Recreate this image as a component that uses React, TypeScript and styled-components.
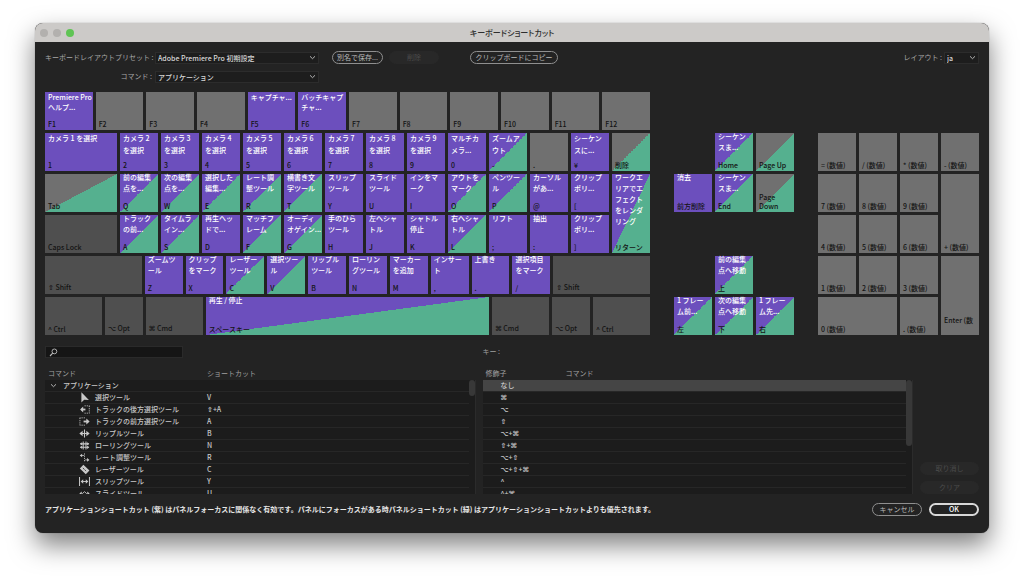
import React from "react";
import styled, { createGlobalStyle, css } from "styled-components";

const GlobalStyle = createGlobalStyle`
  * { box-sizing: border-box; }
  body {
    margin: 0;
    background: #fff;
    font-family: "Noto Sans CJK JP", "DejaVu Sans", sans-serif;
  }
  button, input, select {
    font: inherit;
    color: inherit;
    margin: 0;
    padding: 0;
    border: 0;
    background: none;
  }
`;

const Desktop = styled.div`
  padding: 23px 35px 47px;
`;

const Dialog = styled.main`
  background: #232323;
  border-radius: 8px;
  color: #c4c4c4;
  font-size: 7px;
  line-height: 11px;
  box-shadow: 0 12px 26px rgba(0, 0, 0, 0.5), 0 0 1px rgba(0, 0, 0, 0.5);
`;

const TitleBar = styled.header`
  display: grid;
  grid-template-columns: 1fr auto 1fr;
  align-items: center;
  height: 19px;
  padding: 0 5px;
  border-radius: 8px 8px 0 0;
  background: #cccac8;
`;

const Lights = styled.div`
  display: flex;
  gap: 5px;
`;

const Light = styled.button<{ $on?: boolean }>`
  width: 8px;
  height: 8px;
  border-radius: 50%;
  background: ${(p) => (p.$on ? "#5fc454" : "#b2b0ae")};
`;

const Title = styled.h1`
  margin: 0;
  font-size: 8px;
  font-weight: 500;
  font-feature-settings: "palt";
  color: #2e2e2e;
`;

const Body = styled.div`
  padding: 9px 10px 17px;
`;

const Toolbar = styled.div`
  display: grid;
  grid-template-columns: 107px 164px auto 1fr auto;
  grid-auto-rows: 13px;
  align-items: center;
  gap: 6px 3px;
`;

const FieldLabel = styled.label`
  text-align: right;
  white-space: nowrap;
  color: #a8a8a8;
`;

const SelectBox = styled.div<{ $width?: number }>`
  display: grid;
  grid-template-columns: 1fr 12px;
  align-items: center;
  height: 12px;
  width: ${(p) => (p.$width ? `${p.$width}px` : "auto")};
  border: 1px solid #2c2c2c;
  background: #1d1d1d;
  select {
    grid-area: 1 / 1 / 2 / 3;
    appearance: none;
    height: 10px;
    padding-left: 2px;
    line-height: 10px;
    font-weight: 500;
    color: #d6d6d6;
  }
  svg {
    grid-area: 1 / 2;
    justify-self: center;
    pointer-events: none;
  }
`;

const ButtonGroup = styled.div`
  display: flex;
  gap: 6px;
  margin-left: 10px;
`;

const Pill = styled.button<{ $width: number; $kind?: "primary" | "muted" }>`
  width: ${(p) => p.$width}px;
  height: 13px;
  border-radius: 7px;
  border: 1px solid #8f8f8f;
  line-height: 11px;
  white-space: nowrap;
  color: #b8b8b8;
  ${(p) =>
    p.$kind === "muted" &&
    css`
      border-color: #282828;
      background: #282828;
      color: #4c4c4c;
    `}
  ${(p) =>
    p.$kind === "primary" &&
    css`
      border: 2px solid #d8d8d8;
      line-height: 9px;
      font-weight: 500;
      color: #fff;
    `}
`;

const CopySlot = styled.div`
  margin-left: 28px;
`;

const LayoutField = styled.div`
  display: flex;
  align-items: center;
  gap: 2px;
`;

const Keyboard = styled.section`
  display: grid;
  grid-template-columns: 605fr 120fr 161fr;
  column-gap: 24px;
  margin-top: 9px;
`;

const MainBlock = styled.div`
  display: grid;
  gap: 3px;
`;

type Tone = "cmd" | "both" | "panel" | "free" | "mod";

const PURPLE = "#6c4fbd";
const GREEN = "#55b08f";
const GREY = "#707070";

const toneFill: Record<Tone, string> = {
  cmd: PURPLE,
  both: `linear-gradient(to bottom right, ${PURPLE} 50%, ${GREEN} 50%)`,
  panel: `linear-gradient(to bottom right, ${GREY} 50%, ${GREEN} 50%)`,
  free: GREY,
  mod: "#4f4f4f",
};

const KeyCap = styled.button<{ $tone: Tone; $area?: string }>`
  display: flex;
  flex-direction: column;
  justify-content: space-between;
  min-width: 0;
  padding: 0 0 1px 3px;
  grid-area: ${(p) => p.$area ?? "auto"};
  background: ${(p) => toneFill[p.$tone]};
  text-align: left;
  white-space: pre;
`;

const KeyCommand = styled.span`
  margin-top: -2px;
  line-height: 11px;
  font-weight: 500;
  color: #fff;
`;

const KeyName = styled.span<{ $raised?: boolean }>`
  margin-top: auto;
  padding-bottom: ${(p) => (p.$raised ? 9 : 0)}px;
  line-height: 9px;
  font-weight: 500;
  color: #141414;
`;

const KeyGrid = styled.div<{ $columns: string }>`
  display: grid;
  grid-template-columns: ${(p) => p.$columns};
  grid-auto-rows: 38px;
  gap: 3px;
`;

const FunctionGrid = styled(KeyGrid)`
  ${KeyCommand} {
    margin-top: 0;
    line-height: 10px;
  }
`;

const DigitGrid = styled(KeyGrid)`
  ${KeyCommand} {
    margin-top: -1px;
    line-height: 12px;
  }
`;

const SideGrid = styled(KeyGrid)`
  padding-top: 41px;
`;

const Symbol = styled.span`
  font-family: "DejaVu Sans", sans-serif;
  font-weight: 700;
`;

const SearchRow = styled.div`
  display: grid;
  grid-template-columns: 1fr 1fr 59px;
  gap: 7px;
  margin-top: 11px;
`;

const SearchBox = styled.div`
  display: flex;
  align-items: center;
  width: 138px;
  height: 12px;
  padding-left: 3px;
  border: 1px solid #2a2a2a;
  background: #151515;
  input {
    flex: 1;
    min-width: 0;
    height: 10px;
    padding-left: 3px;
    outline: none;
  }
`;

const KeyLabel = styled.span`
  color: #a0a0a0;
`;

const Lists = styled.div`
  display: grid;
  grid-template-columns: 1fr 1fr 59px;
  gap: 7px;
  margin-top: 8px;
`;

const ListFrame = styled.div`
  display: grid;
  grid-template-columns: 1fr 7px;
  height: 128px;
  overflow: hidden;
`;

const Gutter = styled.div`
  margin-top: 14px;
  background: #1c1c1c;
  border: solid #2b2b2b;
  border-width: 0 1px 1px 0;
`;

const Thumb = styled.div<{ $height: number }>`
  height: ${(p) => p.$height}px;
  border-radius: 3px;
  background: #383838;
`;

const Table = styled.table`
  width: 100%;
  height: 0;
  border-collapse: collapse;
  table-layout: fixed;
  th,
  td {
    height: 12px;
    padding: 0;
    line-height: 11px;
    text-align: left;
    vertical-align: top;
    white-space: nowrap;
  }
`;

const HeadCell = styled.th<{ $width?: number }>`
  width: ${(p) => (p.$width ? `${p.$width}px` : "auto")};
  font-weight: 400;
  color: #a0a0a0;
  && {
    height: 14px;
    padding-left: 3px;
    vertical-align: middle;
  }
`;

const Row = styled.tr<{ $selected?: boolean }>`
  background: ${(p) => (p.$selected ? "#454545" : "#1c1c1c")};
  color: #c8c8c8;
  font-weight: 500;
  box-shadow: inset 0 -1px 0 #272727;
`;

const GroupName = styled.div`
  display: flex;
  align-items: center;
  gap: 6px;
  padding-left: 5px;
`;

const ToolName = styled.div`
  display: flex;
  align-items: center;
  gap: 4px;
  padding-left: 33px;
`;

const ShortcutText = styled.div`
  padding-left: 3px;
`;

const ModifierText = styled.div`
  padding-left: 18px;
`;

const SideButtons = styled.div`
  display: flex;
  flex-direction: column;
  justify-content: flex-end;
  gap: 6px;
`;

const Footer = styled.footer`
  display: flex;
  align-items: center;
  gap: 7px;
  margin-top: 9px;
`;

const Note = styled.p`
  flex: 1;
  margin: 0;
  font-weight: 700;
  color: #e6e6e6;
`;

const Chevron = () => (
  <svg width="7" height="7" viewBox="0 0 7 7" fill="none" stroke="#b4b4b4" strokeWidth="1">
    <path d="M1 2.3 3.5 4.7 6 2.3" />
  </svg>
);

const SearchIcon = () => (
  <svg width="9" height="9" viewBox="0 0 9 9" fill="none" stroke="#bdbdbd">
    <circle cx="5.4" cy="3.4" r="2.4" strokeWidth="0.9" />
    <path d="M3.7 5.2 1 8" strokeWidth="1.1" />
  </svg>
);

type ToolKind =
  | "select"
  | "backward"
  | "forward"
  | "ripple"
  | "rolling"
  | "rate"
  | "razor"
  | "slip"
  | "slide";

const toolShapes: Record<ToolKind, React.ReactNode> = {
  select: <path d="M2.6 0.4V11.4l3.1-3 5.1 .2Z" fill="#c8c8c8" stroke="none" />,
  backward: (
    <>
      <path d="M2.5 6h4.5" strokeWidth="2" />
      <path d="M4.6 2.8 1.2 6l3.4 3.2Z" fill="#c8c8c8" stroke="none" />
      <path d="M6 2h5.5M6 10h5.5M11.2 2v8" strokeDasharray="1.4 1" strokeWidth="0.9" />
    </>
  ),
  forward: (
    <>
      <path d="M5 6h4.5" strokeWidth="2" />
      <path d="M8 2.8 11.6 6 8 9.2Z" fill="#c8c8c8" stroke="none" />
      <path d="M6.5 2H.8M6.5 10H.8M1 2v8" strokeDasharray="1.4 1" strokeWidth="0.9" />
    </>
  ),
  ripple: (
    <>
      <path d="M6 1.6v8.8" strokeWidth="1.2" />
      <path d="M2 6h8" strokeWidth="1.1" />
      <path d="M4 3 .4 6 4 9ZM8 3 11.6 6 8 9Z" fill="#c8c8c8" stroke="none" />
    </>
  ),
  rolling: (
    <>
      <path d="M4.6 1.6v8.8M7.6 1.6v8.8" strokeWidth="1.1" />
      <path d="M1.5 4.2h9.2M1.5 7.9h9.2" strokeWidth="1.2" />
      <path d="M3.4 2.4 1 4.2 3.4 6ZM8.8 2.4l2.4 1.8L8.8 6ZM3.4 6.2 1 7.9l2.4 1.8ZM8.8 6.2l2.4 1.7-2.4 1.8Z" fill="#c8c8c8" stroke="none" />
    </>
  ),
  rate: (
    <>
      <path d="M6 1.5v9" strokeDasharray="1.4 1" strokeWidth="0.9" />
      <path d="M2 3.8h3.4M6.8 8.6h3" strokeWidth="0.9" />
      <path d="M3.4 1.8.8 3.8l2.6 2ZM8.8 6.6l2.6 2-2.6 2Z" fill="#c8c8c8" stroke="none" />
    </>
  ),
  razor: (
    <>
      <path d="M4.8 0.9 11.4 7.2 7.4 11.2 0.9 4.9Z" fill="#c8c8c8" stroke="none" />
      <path d="M4.2 4.3 8 8" stroke="#1c1c1c" strokeWidth="0.9" strokeDasharray="2 .6" />
    </>
  ),
  slip: (
    <>
      <path d="M.6 1.2v9.6M11.4 1.2v9.6" strokeWidth="1.1" />
      <path d="M3 6h6" strokeWidth="1" />
      <path d="M4.6 3.5 1.8 6l2.8 2.5ZM7.4 3.5 10.2 6 7.4 8.5Z" fill="#c8c8c8" stroke="none" />
    </>
  ),
  slide: (
    <>
      <path d="M3.8 8.8V6L6 4l2.2 2v2.8" fill="none" strokeWidth="1" />
      <path d="M3 3.8.4 6 3 8.2ZM9 3.8 11.6 6 9 8.2Z" fill="#c8c8c8" stroke="none" />
    </>
  ),
};

const ToolIcon = ({ kind }: { kind: ToolKind }) => (
  <svg width="13" height="11" viewBox="0 0 12 12" fill="none" stroke="#c8c8c8">
    {toolShapes[kind]}
  </svg>
);

interface KeyData {
  name: string;
  tone: Tone;
  command?: string;
  area?: string;
  raised?: boolean;
}

const k = (name: string, tone: Tone = "free", command?: string, area?: string, raised?: boolean): KeyData => ({
  name,
  tone,
  command,
  area,
  raised,
});

const functionRow: KeyData[] = [
  k("F1", "cmd", "Premiere Pro\nヘルプ..."),
  k("F2"),
  k("F3"),
  k("F4"),
  k("F5", "cmd", "キャプチャ..."),
  k("F6", "cmd", "バッチキャプ\nチャ..."),
  k("F7"),
  k("F8"),
  k("F9"),
  k("F10"),
  k("F11"),
  k("F12"),
];

const digitRow: KeyData[] = [
  k("1", "cmd", "カメラ 1 を選択"),
  k("2", "cmd", "カメラ 2\nを選択"),
  k("3", "cmd", "カメラ 3\nを選択"),
  k("4", "cmd", "カメラ 4\nを選択"),
  k("5", "cmd", "カメラ 5\nを選択"),
  k("6", "cmd", "カメラ 6\nを選択"),
  k("7", "cmd", "カメラ 7\nを選択"),
  k("8", "cmd", "カメラ 8\nを選択"),
  k("9", "cmd", "カメラ 9\nを選択"),
  k("0", "cmd", "マルチカ\nメラ..."),
  k("-", "both", "ズームア\nウト"),
  k("."),
  k("¥", "cmd", "シーケン\nスに..."),
  k("削除", "panel"),
];

const letterRows: KeyData[] = [
  k("Tab", "panel"),
  k("Q", "both", "前の編集\n点を..."),
  k("W", "both", "次の編集\n点を..."),
  k("E", "both", "選択した\n編集..."),
  k("R", "both", "レート調\n整ツール"),
  k("T", "both", "横書き文\n字ツール"),
  k("Y", "cmd", "スリップ\nツール"),
  k("U", "cmd", "スライド\nツール"),
  k("I", "cmd", "インをマ\nーク"),
  k("O", "both", "アウトを\nマーク"),
  k("P", "both", "ペンツー\nル"),
  k("@", "cmd", "カーソル\nがあ..."),
  k("[", "cmd", "クリップ\nポリ..."),
  k("リターン", "both", "ワークエ\nリアでエ\nフェクト\nをレンダ\nリング", "1 / 14 / 3 / 15"),

  k("Caps Lock", "mod"),
  k("A", "both", "トラック\nの前..."),
  k("S", "both", "タイムラ\nイン..."),
  k("D", "cmd", "再生ヘッ\nドで..."),
  k("F", "both", "マッチフ\nレーム"),
  k("G", "both", "オーディ\nオゲイン..."),
  k("H", "cmd", "手のひら\nツール"),
  k("J", "cmd", "左へシャ\nトル"),
  k("K", "cmd", "シャトル\n停止"),
  k("L", "both", "右へシャ\nトル"),
  k(";", "cmd", "リフト"),
  k(":", "cmd", "抽出"),
  k("]", "cmd", "クリップ\nポリ..."),
];

const shiftRow: KeyData[] = [
  k("⇧ Shift", "mod"),
  k("Z", "cmd", "ズームツ\nール"),
  k("X", "cmd", "クリップ\nをマーク"),
  k("C", "both", "レーザー\nツール"),
  k("V", "both", "選択ツー\nル"),
  k("B", "cmd", "リップル\nツール"),
  k("N", "cmd", "ローリン\nグツール"),
  k("M", "cmd", "マーカー\nを追加"),
  k(",", "cmd", "インサー\nト"),
  k(".", "cmd", "上書き"),
  k("/", "cmd", "選択項目\nをマーク"),
  k("⇧ Shift", "mod"),
];

const spaceRow: KeyData[] = [
  k("^ Ctrl", "mod"),
  k("⌥ Opt", "mod"),
  k("⌘ Cmd", "mod"),
  k("スペースキー", "both", "再生 / 停止"),
  k("⌘ Cmd", "mod"),
  k("⌥ Opt", "mod"),
  k("^ Ctrl", "mod"),
];

const navKeys: KeyData[] = [
  k("Home", "both", "シーケン\nスま...", "1 / 2"),
  k("Page Up", "panel", undefined, "1 / 3"),
  k("前方削除", "cmd", "消去", "2 / 1"),
  k("End", "both", "シーケン\nスま...", "2 / 2"),
  k("Page\nDown", "panel", undefined, "2 / 3"),
  k("上", "both", "前の編集\n点へ移動", "4 / 2"),
  k("左", "both", "1 フレー\nム前...", "5 / 1"),
  k("下", "both", "次の編集\n点へ移動", "5 / 2"),
  k("右", "both", "1 フレー\nム先...", "5 / 3"),
];

const padKeys: KeyData[] = [
  k("= (数値)"),
  k("/ (数値)"),
  k("* (数値)"),
  k("- (数値)"),
  k("7 (数値)"),
  k("8 (数値)"),
  k("9 (数値)"),
  k("+ (数値)", "free", undefined, "2 / 4 / 4 / 5"),
  k("4 (数値)"),
  k("5 (数値)"),
  k("6 (数値)"),
  k("1 (数値)"),
  k("2 (数値)"),
  k("3 (数値)"),
  k("Enter (数", "free", undefined, "4 / 4 / 6 / 5", true),
  k("0 (数値)", "free", undefined, "5 / 1 / 6 / 3"),
  k(". (数値)"),
];

const tools: { kind: ToolKind; name: string; shortcut: string }[] = [
  { kind: "select", name: "選択ツール", shortcut: "V" },
  { kind: "backward", name: "トラックの後方選択ツール", shortcut: "⇧+A" },
  { kind: "forward", name: "トラックの前方選択ツール", shortcut: "A" },
  { kind: "ripple", name: "リップルツール", shortcut: "B" },
  { kind: "rolling", name: "ローリングツール", shortcut: "N" },
  { kind: "rate", name: "レート調整ツール", shortcut: "R" },
  { kind: "razor", name: "レーザーツール", shortcut: "C" },
  { kind: "slip", name: "スリップツール", shortcut: "Y" },
  { kind: "slide", name: "スライドツール", shortcut: "U" },
];

const modifiers = ["なし", "⌘", "⌥", "⇧", "⌥+⌘", "⇧+⌘", "⌥+⇧", "⌥+⇧+⌘", "^", "^+⌘"];

/* Sets the modifier symbols of a label in the symbol face. */
const Glyphs = ({ text }: { text: string }) => (
  <>
    {text
      .split(/([⌘⌥⇧])/)
      .filter(Boolean)
      .map((part, i) => (/[⌘⌥⇧]/.test(part) ? <Symbol key={i}>{part}</Symbol> : part))}
  </>
);

const Keys = ({ items }: { items: KeyData[] }) => (
  <>
    {items.map((item, i) => (
      <KeyCap key={i} type="button" $tone={item.tone} $area={item.area}>
        {item.command && <KeyCommand>{item.command}</KeyCommand>}
        <KeyName $raised={item.raised}>
          <Glyphs text={item.name} />
        </KeyName>
      </KeyCap>
    ))}
  </>
);

interface DropDownProps {
  id: string;
  value: string;
  width?: number;
}

const DropDown = ({ id, value, width }: DropDownProps) => (
  <SelectBox $width={width}>
    <select id={id} defaultValue={value}>
      <option>{value}</option>
    </select>
    <Chevron />
  </SelectBox>
);

export default function App() {
  return (
    <Desktop>
      <GlobalStyle />
      <Dialog>
        <TitleBar>
          <Lights>
            <Light type="button" aria-label="閉じる" />
            <Light type="button" aria-label="しまう" />
            <Light type="button" aria-label="拡大" $on />
          </Lights>
          <Title>キーボードショートカット</Title>
        </TitleBar>
        <Body>
          <Toolbar>
            <FieldLabel htmlFor="preset">キーボードレイアウトプリセット :</FieldLabel>
            <DropDown id="preset" value="Adobe Premiere Pro 初期設定" />
            <ButtonGroup>
              <Pill type="button" $width={51}>別名で保存...</Pill>
              <Pill type="button" $width={50} $kind="muted" disabled>削除</Pill>
            </ButtonGroup>
            <CopySlot>
              <Pill type="button" $width={88}>クリップボードにコピー</Pill>
            </CopySlot>
            <LayoutField>
              <FieldLabel htmlFor="layout">レイアウト :</FieldLabel>
              <DropDown id="layout" value="ja" width={35} />
            </LayoutField>
            <FieldLabel htmlFor="command">コマンド :</FieldLabel>
            <DropDown id="command" value="アプリケーション" />
          </Toolbar>

          <Keyboard>
            <MainBlock>
              <FunctionGrid $columns="repeat(12, 1fr)">
                <Keys items={functionRow} />
              </FunctionGrid>
              <DigitGrid $columns="72fr repeat(13, 38fr)">
                <Keys items={digitRow} />
              </DigitGrid>
              <KeyGrid $columns="72fr repeat(13, 38fr)">
                <Keys items={letterRows} />
              </KeyGrid>
              <KeyGrid $columns="97fr repeat(10, 38fr) 97fr">
                <Keys items={shiftRow} />
              </KeyGrid>
              <KeyGrid $columns="57fr 38fr 57fr 284fr 57fr 38fr 57fr">
                <Keys items={spaceRow} />
              </KeyGrid>
            </MainBlock>
            <SideGrid $columns="repeat(3, 1fr)">
              <Keys items={navKeys} />
            </SideGrid>
            <SideGrid $columns="repeat(4, 1fr)">
              <Keys items={padKeys} />
            </SideGrid>
          </Keyboard>

          <SearchRow>
            <SearchBox>
              <SearchIcon />
              <input type="search" aria-label="検索" />
            </SearchBox>
            <KeyLabel>キー :</KeyLabel>
          </SearchRow>

          <Lists>
            <ListFrame>
              <Table>
                <thead>
                  <tr>
                    <HeadCell $width={159}>コマンド</HeadCell>
                    <HeadCell>ショートカット</HeadCell>
                  </tr>
                </thead>
                <tbody>
                  <Row>
                    <td colSpan={2}>
                      <GroupName>
                        <Chevron />
                        アプリケーション
                      </GroupName>
                    </td>
                  </Row>
                  {tools.map((tool) => (
                    <Row key={tool.kind}>
                      <td>
                        <ToolName>
                          <ToolIcon kind={tool.kind} />
                          {tool.name}
                        </ToolName>
                      </td>
                      <td>
                        <ShortcutText>
                          <Glyphs text={tool.shortcut} />
                        </ShortcutText>
                      </td>
                    </Row>
                  ))}
                </tbody>
              </Table>
              <Gutter>
                <Thumb $height={16} />
              </Gutter>
            </ListFrame>
            <ListFrame>
              <Table>
                <thead>
                  <tr>
                    <HeadCell $width={80}>修飾子</HeadCell>
                    <HeadCell>コマンド</HeadCell>
                  </tr>
                </thead>
                <tbody>
                  {modifiers.map((modifier, i) => (
                    <Row key={modifier} $selected={i === 0}>
                      <td>
                        <ModifierText>
                          <Glyphs text={modifier} />
                        </ModifierText>
                      </td>
                      <td />
                    </Row>
                  ))}
                </tbody>
              </Table>
              <Gutter>
                <Thumb $height={66} />
              </Gutter>
            </ListFrame>
            <SideButtons>
              <Pill type="button" $width={59} $kind="muted" disabled>取り消し</Pill>
              <Pill type="button" $width={59} $kind="muted" disabled>クリア</Pill>
            </SideButtons>
          </Lists>

          <Footer>
            <Note>
              アプリケーションショートカット (紫) はパネルフォーカスに関係なく有効です。パネルにフォーカスがある時パネルショートカット (緑) はアプリケーションショートカットよりも優先されます。
            </Note>
            <Pill type="button" $width={50}>キャンセル</Pill>
            <Pill type="button" $width={50} $kind="primary">OK</Pill>
          </Footer>
        </Body>
      </Dialog>
    </Desktop>
  );
}
